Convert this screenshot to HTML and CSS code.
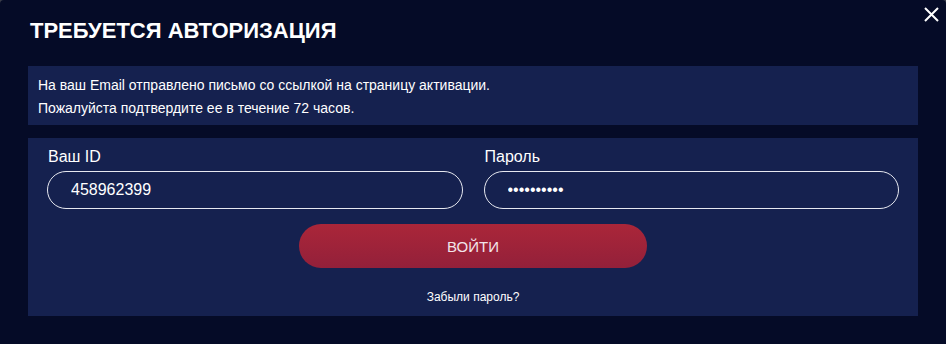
FILE: index.html
```html
<!DOCTYPE html>
<html lang="ru">
<head>
<meta charset="utf-8">
<title>Авторизация</title>
<link rel="stylesheet" href="styles.css">
</head>
<body>
<div class="modal">
  <button class="close" type="button" aria-label="Закрыть">
    <svg width="15" height="15" viewBox="0 0 15 15"><path d="M1 1L14 14M14 1L1 14" stroke="#fff" stroke-width="2" fill="none"/></svg>
  </button>
  <h1 class="title">ТРЕБУЕТСЯ АВТОРИЗАЦИЯ</h1>
  <div class="notice">
    <p>На ваш Email отправлено письмо со ссылкой на страницу активации.</p>
    <p>Пожалуйста подтвердите ее в течение 72 часов.</p>
  </div>
  <form class="form">
    <div class="fields">
      <label class="field">
        <span class="label">Ваш ID</span>
        <input class="input" type="text" value="458962399" autofocus>
      </label>
      <label class="field">
        <span class="label">Пароль</span>
        <input class="input" type="password" value="1234567890">
      </label>
    </div>
    <button class="submit" type="button">ВОЙТИ</button>
    <a class="forgot" href="#">Забыли пароль?</a>
  </form>
</div>
</body>
</html>
```
FILE: styles.css
```css
html, body {
  margin: 0;
  padding: 0;
  background: #3b3e4a;
}
body {
  font-family: "Liberation Sans", Arial, sans-serif;
  color: #fff;
}
.modal {
  position: relative;
  box-sizing: border-box;
  height: 344px;
  padding: 18px 28px 0 28px;
  background: #050b27;
  border-radius: 4px 4px 0 0;
}
.close {
  position: absolute;
  top: 7px;
  right: 7px;
  width: 15px;
  height: 15px;
  padding: 0;
  border: 0;
  background: none;
  cursor: pointer;
}
.close svg { display: block; }
.title {
  margin: 0 0 0 2px;
  font-size: 22px;
  line-height: 25px;
  font-weight: bold;
  letter-spacing: 0;
}
.notice {
  margin-top: 23px;
  padding: 8px 10px 5px 10px;
  background: #15214f;
  font-size: 14px;
  line-height: 23px;
}
.notice p { margin: 0; }
.form {
  display: flex;
  flex-direction: column;
  align-items: center;
  margin-top: 13px;
  padding: 10px 19px 12px 19px;
  background: #15214f;
}
.fields {
  align-self: stretch;
  display: grid;
  grid-template-columns: 1fr 1fr;
  column-gap: 21px;
}
.field {
  display: flex;
  flex-direction: column;
}
.label {
  font-size: 16px;
  line-height: 18px;
  margin-left: 1px;
  margin-bottom: 5px;
}
.input {
  box-sizing: border-box;
  height: 38px;
  width: 100%;
  padding: 0 23px;
  border: 1px solid #e6e8f0;
  border-radius: 19px;
  background: transparent;
  color: #fff;
  caret-color: #fff;
  font-family: "Liberation Sans", Arial, sans-serif;
  font-size: 16px;
  outline: none;
}
.submit {
  margin-top: 15px;
  width: 348px;
  height: 44px;
  border: 0;
  border-radius: 22px;
  background: linear-gradient(180deg, #aa2639 0%, #93203a 100%);
  color: #f2e4ea;
  font-family: "Liberation Sans", Arial, sans-serif;
  font-size: 15px;
  cursor: pointer;
}
.forgot {
  margin-top: 22px;
  font-size: 12px;
  line-height: 14px;
  color: #fff;
  text-decoration: none;
}
```
